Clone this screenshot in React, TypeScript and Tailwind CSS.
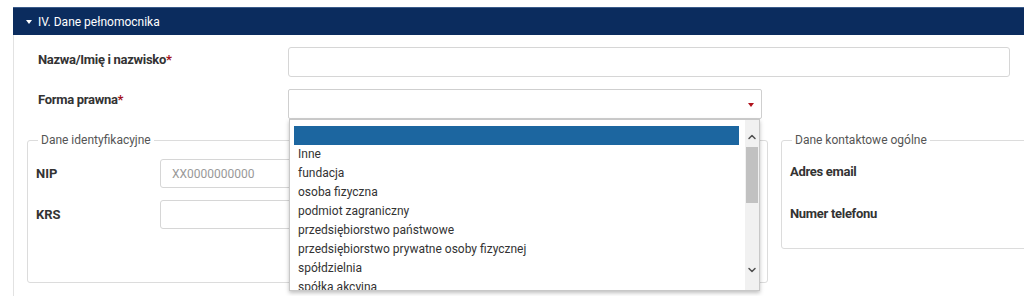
import { ChevronDown, ChevronUp } from "lucide-react"

const options = [
  "",
  "Inne",
  "fundacja",
  "osoba fizyczna",
  "podmiot zagraniczny",
  "przedsiębiorstwo państwowe",
  "przedsiębiorstwo prywatne osoby fizycznej",
  "spółdzielnia",
  "spółka akcyjna",
]

function Required({ children }: { children: string }) {
  return (
    <span className="text-[13px] font-bold tracking-[-0.3px] text-[#333]">
      {children}
      <span className="text-[#a3121b]">*</span>
    </span>
  )
}

function DropdownList() {
  return (
    <div className="absolute left-px top-[30px] z-10 flex h-[172px] w-[471px] overflow-hidden border border-[#c8c8c8] bg-white shadow-[0_2px_4px_rgba(0,0,0,0.25)]">
      <ul className="flex-1 pl-[4px] pr-[6px] pt-[6px]">
        {options.map((o, i) => (
          <li
            key={i}
            className={
              i === 0
                ? "h-[19px] bg-[#1c66a0]"
                : "h-[19px] pl-[4px] text-[12px] leading-[19px] text-[#333]"
            }
          >
            {o}
          </li>
        ))}
      </ul>
      {/* fake scrollbar */}
      <div className="flex w-[14px] flex-col items-center bg-[#f1f1f1]">
        <ChevronUp className="mt-[11px] h-[12px] w-[12px] text-[#505050]" strokeWidth={3} />
        <div className="mt-[4px] h-[56px] w-[12px] bg-[#c1c1c1]" />
        <ChevronDown className="mt-[61px] h-[12px] w-[12px] text-[#505050]" strokeWidth={3} />
      </div>
    </div>
  )
}

export default function App() {
  return (
    <div className="h-[296px] w-[1024px] overflow-hidden bg-white pl-[13px] pt-[7px] font-['Roboto',sans-serif]">
      {/* Section header */}
      <div className="flex h-[28px] items-center border-t border-[#3a5b8a] bg-[#0b2c5e] pl-[13px] text-[12px] text-white">
        <span className="mr-[6px] h-0 w-0 border-x-[3.5px] border-t-[4px] border-x-transparent border-t-white" />
        IV. Dane pełnomocnika
      </div>

      <div className="h-[300px] border-l border-[#e2e2e2]">
        <div className="flex items-start pt-[12px] pr-[14px]">
          <div className="w-[274px] pl-[24px] pt-[2px] leading-[20px]">
            <Required>Nazwa/Imię i nazwisko</Required>
          </div>
          <div className="h-[30px] flex-1 rounded-[3px] border border-[#d6d6d6] bg-white" />
        </div>

        <div className="flex items-start pt-[12px]">
          <div className="w-[274px] pl-[24px] leading-[20px]">
            <Required>Forma prawna</Required>
          </div>
          <div className="relative">
            <div className="flex h-[30px] w-[474px] items-center justify-end rounded-[2px] border border-[#cfcfcf] bg-white pr-[7px]">
              <span className="mt-[2px] h-0 w-0 border-x-[3.5px] border-t-[4px] border-x-transparent border-t-[#b0121c]" />
            </div>
            <DropdownList />
          </div>
        </div>

        <div className="flex gap-[13px] pl-[13px] pt-[12px]">
          <fieldset className="h-[152px] w-[741px] shrink-0 rounded-[3px] border border-[#dcdcdc] px-[8px]">
            <legend className="ml-[2px] px-[3px] text-[12px] text-[#555]">Dane identyfikacyjne</legend>
            <div className="mt-[10px] flex items-center">
              <span className="w-[124px] text-[13px] font-bold text-[#333]">NIP</span>
              <div className="flex h-[29px] w-[320px] items-center rounded-[3px] border border-[#d6d6d6] pl-[11px] text-[12px] text-[#999]">
                XX0000000000
              </div>
            </div>
            <div className="mt-[12px] flex items-center">
              <span className="w-[124px] text-[13px] font-bold text-[#333]">KRS</span>
              <div className="h-[29px] w-[320px] rounded-[3px] border border-[#d6d6d6]" />
            </div>
          </fieldset>

          <fieldset className="h-[118px] w-[260px] shrink-0 rounded-[3px] border border-[#dcdcdc] px-[8px]">
            <legend className="ml-[2px] px-[3px] text-[12px] text-[#555]">Dane kontaktowe ogólne</legend>
            <div className="mt-[13px] text-[13px] font-bold tracking-[-0.3px] text-[#333]">Adres email</div>
            <div className="mt-[22px] text-[13px] font-bold tracking-[-0.3px] text-[#333]">Numer telefonu</div>
          </fieldset>
        </div>
      </div>
    </div>
  )
}
